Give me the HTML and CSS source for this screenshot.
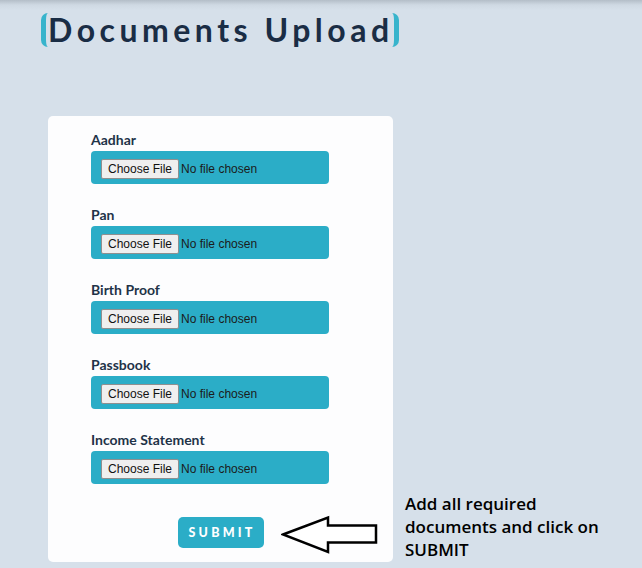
FILE: index.html
```html
<!DOCTYPE html>
<html lang="en">
<head>
<meta charset="utf-8">
<title>Documents Upload</title>
<link rel="stylesheet" href="styles.css">
</head>
<body>
<header class="page-head">
  <h1 class="title">Documents Upload</h1>
</header>
<main class="content">
  <form class="card">
    <div class="field">
      <label class="field-label" for="f1">Aadhar</label>
      <div class="file-box"><input class="file-input" id="f1" type="file"></div>
    </div>
    <div class="field">
      <label class="field-label" for="f2">Pan</label>
      <div class="file-box"><input class="file-input" id="f2" type="file"></div>
    </div>
    <div class="field">
      <label class="field-label" for="f3">Birth Proof</label>
      <div class="file-box"><input class="file-input" id="f3" type="file"></div>
    </div>
    <div class="field">
      <label class="field-label" for="f4">Passbook</label>
      <div class="file-box"><input class="file-input" id="f4" type="file"></div>
    </div>
    <div class="field">
      <label class="field-label" for="f5">Income Statement</label>
      <div class="file-box"><input class="file-input" id="f5" type="file"></div>
    </div>
    <div class="actions">
      <button class="submit" type="button">SUBMIT</button>
    </div>
    <svg class="arrow" width="98" height="40" viewBox="0 0 98 40" aria-hidden="true">
      <path d="M2 19.5 L47 2.5 L47 10.5 L95 10.5 L95 27.5 L47 27.5 L47 37 Z" fill="#ffffff" stroke="#000000" stroke-width="2.5" stroke-linejoin="miter"/>
    </svg>
  </form>
  <p class="hint">Add all required documents and click on SUBMIT</p>
</main>
</body>
</html>
```

FILE: styles.css
```css
html, body {
  margin: 0;
  padding: 0;
}

body {
  width: 642px;
  height: 568px;
  overflow: hidden;
  background: linear-gradient(#b4bec8 0px, #cfd9e3 5px, #d6e0ea 10px);
  background-color: #d6e0ea;
  font-family: Lato, "Open Sans", sans-serif;
}

.page-head {
  padding: 13px 0 0 41px;
  height: 34px;
}

.title {
  display: inline-block;
  margin: 0;
  height: 34px;
  box-sizing: border-box;
  padding: 0 0 0 2px;
  border-left: 5px solid #38b4cc;
  border-right: 5px solid #38b4cc;
  border-radius: 7px;
  font-family: Lato, sans-serif;
  font-weight: 700;
  font-size: 32px;
  line-height: 34px;
  letter-spacing: 4.5px;
  color: #1a2d45;
}

.content {
  display: flex;
  gap: 12px;
  padding-left: 48px;
  margin-top: 69px;
}

.card {
  position: relative;
  width: 345px;
  height: 446px;
  box-sizing: border-box;
  padding: 15px 0 0 43px;
  background: #fdfdfe;
  border-radius: 5px;
  display: flex;
  flex-direction: column;
}

.field {
  display: flex;
  flex-direction: column;
  margin-bottom: 22px;
}

.field-label {
  font-family: Lato, sans-serif;
  font-weight: 700;
  font-size: 14px;
  line-height: 17px;
  color: #1f3348;
  margin-bottom: 3px;
}

.file-box {
  width: 238px;
  height: 33px;
  box-sizing: border-box;
  padding: 6px 0 0 10px;
  background: #2badc7;
  border-radius: 4px;
}

.file-input {
  font-family: "Liberation Sans", Arial, sans-serif;
  font-size: 12px;
  color: #1b1b1b;
}

.file-input::file-selector-button {
  font-family: "Liberation Sans", Arial, sans-serif;
  font-size: 12px;
  height: 20px;
  padding: 0 6px;
  margin-right: 2px;
  background: #efefef;
  border: 1px solid #8f8f8f;
  border-radius: 2px;
  color: #111;
}

.actions {
  display: flex;
  justify-content: center;
  margin: 11px 0 0 -43px;
}

.submit {
  width: 86px;
  height: 31px;
  border: none;
  border-radius: 5px;
  background: #2badc7;
  color: #ffffff;
  font-family: Lato, sans-serif;
  font-weight: 900;
  font-size: 12.5px;
  letter-spacing: 3.2px;
  padding: 0 0 0 3px;
}

.arrow {
  position: absolute;
  left: 233px;
  top: 399px;
}

.hint {
  align-self: flex-end;
  margin: 0 0 1px 0;
  width: 215px;
  font-family: "Open Sans", sans-serif;
  font-weight: 600;
  font-size: 17px;
  line-height: 23px;
  color: #000000;
}
```
